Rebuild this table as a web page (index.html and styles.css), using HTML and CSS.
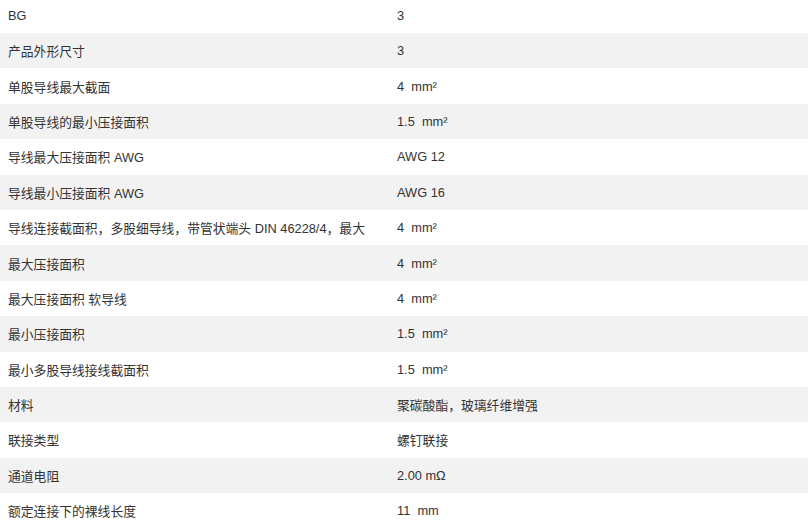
FILE: index.html
```html
<!DOCTYPE html>
<html lang="zh-CN">
<head>
<meta charset="utf-8">
<link rel="stylesheet" href="styles.css">
</head>
<body>
<div class="specs">
  <div class="row"><div class="k">BG</div><div class="v">3</div></div>
  <div class="row"><div class="k">产品外形尺寸</div><div class="v">3</div></div>
  <div class="row"><div class="k">单股导线最大截面</div><div class="v">4&nbsp; mm²</div></div>
  <div class="row"><div class="k">单股导线的最小压接面积</div><div class="v">1.5&nbsp; mm²</div></div>
  <div class="row"><div class="k">导线最大压接面积 AWG</div><div class="v">AWG 12</div></div>
  <div class="row"><div class="k">导线最小压接面积 AWG</div><div class="v">AWG 16</div></div>
  <div class="row"><div class="k">导线连接截面积，多股细导线，带管状端头 DIN 46228/4，最大</div><div class="v">4&nbsp; mm²</div></div>
  <div class="row"><div class="k">最大压接面积</div><div class="v">4&nbsp; mm²</div></div>
  <div class="row"><div class="k">最大压接面积 软导线</div><div class="v">4&nbsp; mm²</div></div>
  <div class="row"><div class="k">最小压接面积</div><div class="v">1.5&nbsp; mm²</div></div>
  <div class="row"><div class="k">最小多股导线接线截面积</div><div class="v">1.5&nbsp; mm²</div></div>
  <div class="row"><div class="k">材料</div><div class="v">聚碳酸酯，玻璃纤维增强</div></div>
  <div class="row"><div class="k">联接类型</div><div class="v">螺钉联接</div></div>
  <div class="row"><div class="k">通道电阻</div><div class="v">2.00 mΩ</div></div>
  <div class="row"><div class="k">额定连接下的裸线长度</div><div class="v">11&nbsp; mm</div></div>
</div>
</body>
</html>
```
FILE: styles.css
```css
html, body {
  margin: 0;
  padding: 0;
  background: #fff;
  overflow: hidden;
}
.specs {
  margin-top: -2.4px;
  font-family: "Liberation Sans", "Noto Sans CJK SC", sans-serif;
  font-size: 12.8px;
  color: #333;
}
.row {
  display: grid;
  grid-template-columns: 389px 1fr;
  height: 35.4px;
  align-items: center;
}
.row:nth-child(even) {
  background: #f2f2f2;
}
.k, .v {
  padding-left: 8px;
  white-space: nowrap;
}
```
